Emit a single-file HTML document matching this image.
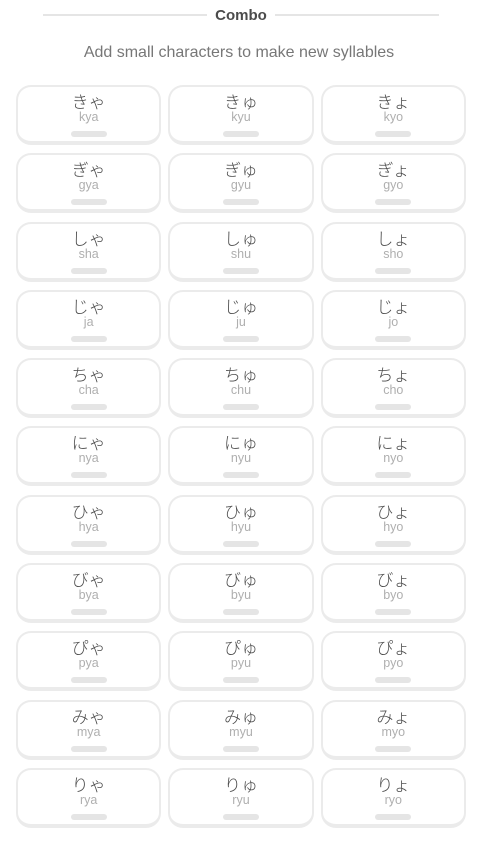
<!DOCTYPE html>
<html><head><meta charset="utf-8"><style>
body{margin:0;width:478px;height:845px;background:#fff;font-family:"Liberation Sans","Noto Sans CJK JP",sans-serif;overflow:hidden}
.hdr{position:absolute;top:5px;left:43px;width:396px;height:20px;display:flex;align-items:center}
.hdr .l{flex:1;height:2px;background:#e5e5e5}
.hdr b{font-size:15px;color:#4b4b4b;padding:0 8px}
.sub{position:absolute;top:44px;left:0;width:478px;text-align:center;font-size:16px;color:#777}
.grid{position:absolute;top:85px;left:16px;width:450px;display:grid;grid-template-columns:repeat(3,1fr);column-gap:7px;row-gap:8.3px}
.c{box-sizing:border-box;height:60px;border:2px solid #ebebeb;border-bottom-width:4px;border-radius:15px;text-align:center;position:relative}
.k{position:absolute;top:4px;left:0;right:0;font-family:"Noto Sans CJK JP",sans-serif;font-weight:300;font-size:17px;color:#4b4b4b;line-height:20px}
.r{position:absolute;top:23px;left:0;right:0;font-size:12.5px;color:#afafaf;line-height:14px}
.b{position:absolute;top:44px;left:50%;margin-left:-18px;width:36px;height:6px;border-radius:3px;background:#e5e5e5}
</style></head><body>
<div class="hdr"><div class="l"></div><b>Combo</b><div class="l"></div></div>
<div class="sub">Add small characters to make new syllables</div>
<div class="grid">
<div class="c"><div class="k">きゃ</div><div class="r">kya</div><div class="b"></div></div>
<div class="c"><div class="k">きゅ</div><div class="r">kyu</div><div class="b"></div></div>
<div class="c"><div class="k">きょ</div><div class="r">kyo</div><div class="b"></div></div>
<div class="c"><div class="k">ぎゃ</div><div class="r">gya</div><div class="b"></div></div>
<div class="c"><div class="k">ぎゅ</div><div class="r">gyu</div><div class="b"></div></div>
<div class="c"><div class="k">ぎょ</div><div class="r">gyo</div><div class="b"></div></div>
<div class="c"><div class="k">しゃ</div><div class="r">sha</div><div class="b"></div></div>
<div class="c"><div class="k">しゅ</div><div class="r">shu</div><div class="b"></div></div>
<div class="c"><div class="k">しょ</div><div class="r">sho</div><div class="b"></div></div>
<div class="c"><div class="k">じゃ</div><div class="r">ja</div><div class="b"></div></div>
<div class="c"><div class="k">じゅ</div><div class="r">ju</div><div class="b"></div></div>
<div class="c"><div class="k">じょ</div><div class="r">jo</div><div class="b"></div></div>
<div class="c"><div class="k">ちゃ</div><div class="r">cha</div><div class="b"></div></div>
<div class="c"><div class="k">ちゅ</div><div class="r">chu</div><div class="b"></div></div>
<div class="c"><div class="k">ちょ</div><div class="r">cho</div><div class="b"></div></div>
<div class="c"><div class="k">にゃ</div><div class="r">nya</div><div class="b"></div></div>
<div class="c"><div class="k">にゅ</div><div class="r">nyu</div><div class="b"></div></div>
<div class="c"><div class="k">にょ</div><div class="r">nyo</div><div class="b"></div></div>
<div class="c"><div class="k">ひゃ</div><div class="r">hya</div><div class="b"></div></div>
<div class="c"><div class="k">ひゅ</div><div class="r">hyu</div><div class="b"></div></div>
<div class="c"><div class="k">ひょ</div><div class="r">hyo</div><div class="b"></div></div>
<div class="c"><div class="k">びゃ</div><div class="r">bya</div><div class="b"></div></div>
<div class="c"><div class="k">びゅ</div><div class="r">byu</div><div class="b"></div></div>
<div class="c"><div class="k">びょ</div><div class="r">byo</div><div class="b"></div></div>
<div class="c"><div class="k">ぴゃ</div><div class="r">pya</div><div class="b"></div></div>
<div class="c"><div class="k">ぴゅ</div><div class="r">pyu</div><div class="b"></div></div>
<div class="c"><div class="k">ぴょ</div><div class="r">pyo</div><div class="b"></div></div>
<div class="c"><div class="k">みゃ</div><div class="r">mya</div><div class="b"></div></div>
<div class="c"><div class="k">みゅ</div><div class="r">myu</div><div class="b"></div></div>
<div class="c"><div class="k">みょ</div><div class="r">myo</div><div class="b"></div></div>
<div class="c"><div class="k">りゃ</div><div class="r">rya</div><div class="b"></div></div>
<div class="c"><div class="k">りゅ</div><div class="r">ryu</div><div class="b"></div></div>
<div class="c"><div class="k">りょ</div><div class="r">ryo</div><div class="b"></div></div>
</div>
</body></html>
